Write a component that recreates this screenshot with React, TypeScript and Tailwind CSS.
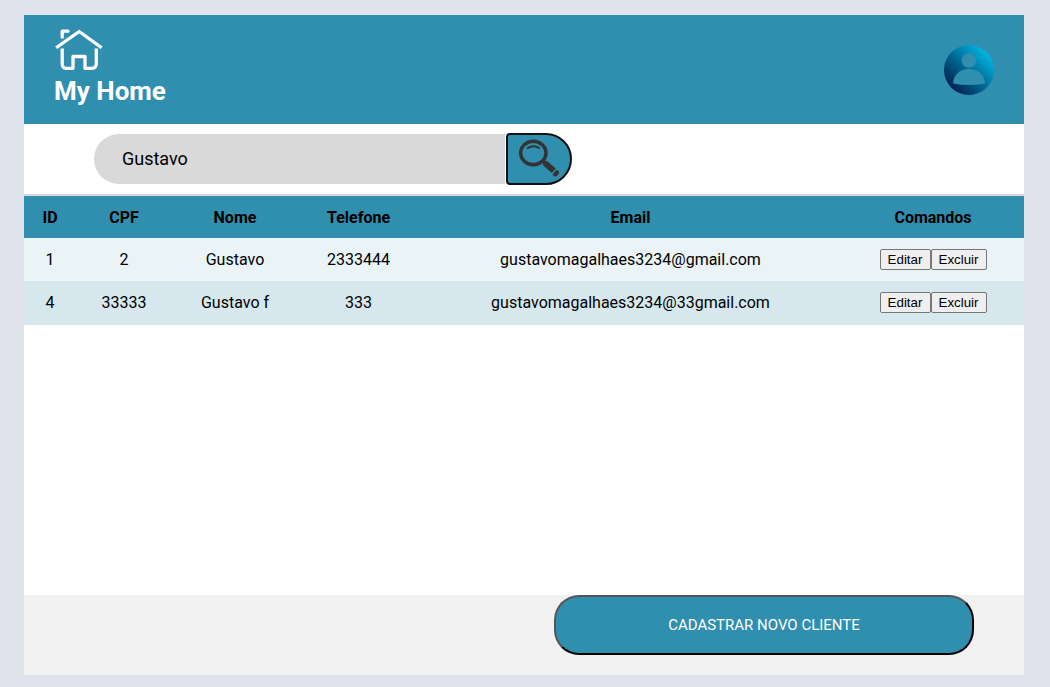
const clients = [
  { id: '1', cpf: '2', name: 'Gustavo', phone: '2333444', email: 'gustavomagalhaes3234@gmail.com' },
  { id: '4', cpf: '33333', name: 'Gustavo f', phone: '333', email: 'gustavomagalhaes3234@33gmail.com' },
];

function HouseIcon() {
  return (
    <svg className="block h-[46px] w-[50px]" viewBox="0 0 50 46" fill="none" stroke="#fff" strokeWidth="3.3" strokeLinecap="round" strokeLinejoin="round">
      <path d="M3.500 21.800 25.200 6.500 46.300 21.800" strokeLinecap="square" />
      <path d="M8.200 12.200V6.200H14" />
      <path d="M8.200 23.500V38.500Q8.200 43.300 12 43.300H19V31.500H31V43.300H38Q42.300 43.300 42.300 38.500V23.500" strokeLinecap="butt" />
    </svg>
  );
}

function Avatar() {
  return (
    <svg className="block size-[50px]" viewBox="0 0 50 50">
      <defs>
        <linearGradient id="avatar" x1="0.15" y1="0.85" x2="0.85" y2="0.15">
          <stop offset="0" stopColor="#002450" />
          <stop offset="1" stopColor="#00b4e0" />
        </linearGradient>
      </defs>
      <circle cx="25" cy="25" r="25" fill="url(#avatar)" />
      <circle cx="25" cy="15.500" r="7.300" fill="#308eae" />
      <path d="M9 38.500C9.500 29.500 16 24 25 24S40.500 29.500 41 38.500Q25 41.500 9 38.500Z" fill="#308eae" />
    </svg>
  );
}

function SearchIcon() {
  return (
    <svg className="block size-10" viewBox="0 0 40 40" fill="none" stroke="#333">
      <ellipse cx="14.300" cy="16" rx="12.700" ry="11.700" strokeWidth="3.500" />
      <path d="M8.500 11.300Q14.300 7.300 20.200 11" strokeWidth="1.900" strokeLinecap="round" />
      <path d="M23.500 23.500 26.500 26.200" strokeWidth="3" />
      <path d="M27 27 34.300 33.200" strokeWidth="6" strokeLinecap="round" />
      <path d="M36.300 36.700 37.300 35.700" strokeWidth="5.400" strokeLinecap="round" />
      <path d="M38.500 30.700 32 37.900" stroke="#308eae" strokeWidth="1.500" />
    </svg>
  );
}

function CommandButton({ label }: { label: string }) {
  return (
    <button className="h-[21px] rounded-[2px] border border-[#767676] bg-[#efefef] px-[7px] font-['Liberation_Sans',sans-serif] text-[13.333px] leading-[15px] first:w-[51px] last:w-[56px]">
      {label}
    </button>
  );
}

export default function App() {
  return (
    <div className="h-[687px] overflow-hidden bg-[#e0e3ec] pt-[15px] pl-6 font-[Roboto,sans-serif] text-black">
      <main className="flex h-[660px] w-[1000px] flex-col bg-white">
        <header className="flex h-[109px] shrink-0 items-center justify-between bg-[#308eae] pr-[30px] pl-[30px]">
          <div className="h-full pt-[10px]">
            <HouseIcon />
            <h1 className="mt-1 text-[26px] leading-[32px] font-bold text-white">My Home</h1>
          </div>
          <Avatar />
        </header>

        <section className="flex h-[72px] shrink-0 items-center border-b-2 border-[#d9d9d9] pl-[70px]">
          <input
            defaultValue="Gustavo"
            className="h-[50px] w-[411px] rounded-l-[25px] bg-[#d9d9d9] pb-0.5 pl-7 text-lg outline-none"
          />
          <button className="ml-px flex h-[52px] w-[66px] items-center justify-center rounded-l-[4px] rounded-r-[26px] border-2 border-[#101010] bg-[#308eae] pb-1">
            <SearchIcon />
          </button>
        </section>

        <table className="w-full table-fixed border-collapse text-center text-base">
          <colgroup>
            <col className="w-[52px]" />
            <col className="w-[96px]" />
            <col className="w-[126px]" />
            <col className="w-[121px]" />
            <col className="w-[423px]" />
            <col className="w-[182px]" />
          </colgroup>
          <thead>
            <tr className="h-[42px] bg-[#308eae]">
              <th className="pt-0.5 font-bold">ID</th>
              <th className="pt-0.5 font-bold">CPF</th>
              <th className="pt-0.5 font-bold">Nome</th>
              <th className="pt-0.5 font-bold">Telefone</th>
              <th className="pt-0.5 font-bold">Email</th>
              <th className="pt-0.5 font-bold">Comandos</th>
            </tr>
          </thead>
          <tbody>
            {clients.map((client) => (
              <tr key={client.id} className="h-[43px] bg-[#eaf3f6] even:h-[44px] even:bg-[#d6e8ee]">
                <td>{client.id}</td>
                <td>{client.cpf}</td>
                <td>{client.name}</td>
                <td>{client.phone}</td>
                <td>{client.email}</td>
                <td className="pb-px">
                  <div className="flex justify-center">
                    <CommandButton label="Editar" />
                    <CommandButton label="Excluir" />
                  </div>
                </td>
              </tr>
            ))}
          </tbody>
        </table>

        <footer className="mt-auto flex h-20 shrink-0 items-start justify-end bg-[#f1f1f1] pr-[50px]">
          <button className="h-[60px] w-[420px] rounded-[25px] border-2 border-t-[#555] border-r-black border-b-black border-l-[#555] bg-[#308eae] text-[15px] text-white">
            CADASTRAR NOVO CLIENTE
          </button>
        </footer>
      </main>
    </div>
  );
}
